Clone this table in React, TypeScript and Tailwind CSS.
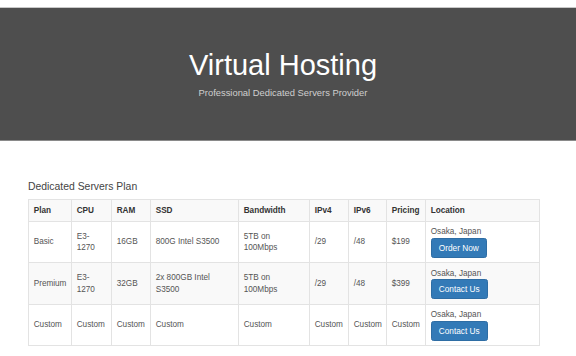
const rows = [
  { plan: 'Basic', cpu: ['E3-', '1270'], ram: '16GB', ssd: '800G Intel S3500', bw: '5TB on 100Mbps', v4: '/29', v6: '/48', price: '$199', btn: 'Order Now' },
  { plan: 'Premium', cpu: ['E3-', '1270'], ram: '32GB', ssd: '2x 800GB Intel S3500', bw: '5TB on 100Mbps', v4: '/29', v6: '/48', price: '$399', btn: 'Contact Us' },
  { plan: 'Custom', cpu: ['Custom'], ram: 'Custom', ssd: 'Custom', bw: 'Custom', v4: 'Custom', v6: 'Custom', price: 'Custom', btn: 'Contact Us' },
];

const cell = 'border border-[#e3e3e3] px-[4.7px] py-[4.3px] align-middle text-left';

const App = () => {
  return (
    <div className="w-[576px] h-[356px] overflow-hidden bg-white font-['Liberation_Sans',Arial,sans-serif]">
      <div className="h-[7px]" />
      <div className="border-t border-[#c8c8c8] border-b border-b-[#8a8a8a] bg-[#4e4e4e] h-[134px] flex flex-col items-center pt-[42.5px] pr-[10px]">
        <h1 className="text-[29px] leading-none text-white">Virtual Hosting</h1>
        <p className="mt-[8px] text-[9.4px] leading-none text-[#cfcfcf]">Professional Dedicated Servers Provider</p>
      </div>

      <div className="ml-[28px] mt-[41px] w-[511px]">
        <h4 className="text-[10.4px] leading-none text-[#444] mb-[6.6px]">Dedicated Servers Plan</h4>
        <table className="w-[511px] table-fixed border-collapse text-[8.2px] leading-[11.7px] text-[#555]">
          <colgroup>
            <col className="w-[43px]" />
            <col className="w-[40px]" />
            <col className="w-[39px]" />
            <col className="w-[88px]" />
            <col className="w-[71px]" />
            <col className="w-[39px]" />
            <col className="w-[38px]" />
            <col className="w-[39px]" />
            <col className="w-[114px]" />
          </colgroup>
          <tbody>
            <tr className="bg-[#f9f9f9] font-bold text-[#333]">
              {['Plan', 'CPU', 'RAM', 'SSD', 'Bandwidth', 'IPv4', 'IPv6', 'Pricing', 'Location'].map((h) => (
                <td key={h} className="border border-[#e3e3e3] px-[4.7px] py-[4.7px] align-middle text-left">{h}</td>
              ))}
            </tr>
            {rows.map((r, i) => (
              <tr key={i} className={i === 1 ? 'bg-[#f9f9f9]' : 'bg-white'}>
                <td className={cell}>{r.plan}</td>
                <td className={cell}>
                  {r.cpu.map((c, j) => (
                    <div key={j}>{c}</div>
                  ))}
                </td>
                <td className={cell}>{r.ram}</td>
                <td className={cell}>{r.ssd}</td>
                <td className={cell}>{r.bw}</td>
                <td className={cell}>{r.v4}</td>
                <td className={cell}>{r.v6}</td>
                <td className={cell}>{r.price}</td>
                <td className={cell}>
                  <div>Osaka, Japan</div>
                  <button className="block h-[20px] px-[7px] rounded-[2.5px] border border-[#2e6da4] bg-[#337ab7] text-white text-[8.3px] leading-none">
                    {r.btn}
                  </button>
                </td>
              </tr>
            ))}
          </tbody>
        </table>
      </div>
    </div>
  );
};

export default App;
